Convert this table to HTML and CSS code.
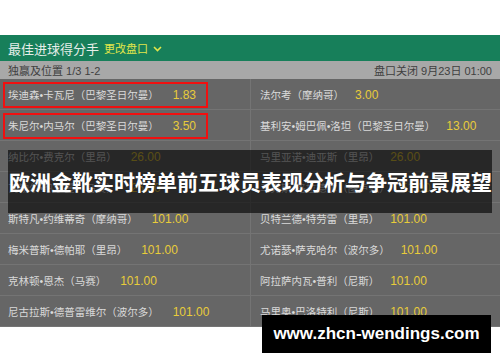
FILE: index.html
```html
<!DOCTYPE html>
<html lang="zh">
<head>
<meta charset="utf-8">
<title>最佳进球得分手</title>
<link rel="stylesheet" href="styles.css">
</head>
<body>
<div class="page">
  <div class="header">
    <span class="title">最佳进球得分手</span>
    <span class="change">更改盘口</span>
    <svg class="chev" width="9" height="6" viewBox="0 0 9 6"><polyline points="1,1 4.5,4.5 8,1" fill="none" stroke="#e2e64a" stroke-width="1.6"/></svg>
  </div>
  <div class="subbar">
    <span>独赢及位置 1/3 1-2</span>
    <span>盘口关闭 9月23日 01:00</span>
  </div>
  <div class="grid">
    <div class="cell left"><div class="box pick"><span class="name">埃迪森•卡瓦尼（巴黎圣日尔曼）</span><span class="odds">1.83</span></div></div>
    <div class="cell right"><div class="box"><span class="name">法尔考（摩纳哥）</span><span class="odds">3.00</span></div></div>

    <div class="cell left"><div class="box pick"><span class="name">朱尼尔•内马尔（巴黎圣日尔曼）</span><span class="odds">3.50</span></div></div>
    <div class="cell right"><div class="box"><span class="name">基利安•姆巴佩•洛坦（巴黎圣日尔曼）</span><span class="odds">13.00</span></div></div>

    <div class="cell left"><div class="box"><span class="name">纳比尔•费克尔（里昂）</span><span class="odds">26.00</span></div></div>
    <div class="cell right"><div class="box"><span class="name">马里亚诺•迪亚斯（里昂）</span><span class="odds">26.00</span></div></div>

    <div class="cell left"><div class="box"><span class="name">瓦勒尔•热尔曼（马赛）</span><span class="odds">26.00</span></div></div>
    <div class="cell right"><div class="box"><span class="name">马克斯•格拉德尔（图卢兹）</span><span class="odds">51.00</span></div></div>

    <div class="cell left"><div class="box"><span class="name">斯特凡•约维蒂奇（摩纳哥）</span><span class="odds">101.00</span></div></div>
    <div class="cell right"><div class="box"><span class="name">贝特兰德•特劳雷（里昂）</span><span class="odds">101.00</span></div></div>

    <div class="cell left"><div class="box"><span class="name">梅米普斯•德帕耶（里昂）</span><span class="odds">101.00</span></div></div>
    <div class="cell right"><div class="box"><span class="name">尤诺瑟•萨克哈尔（波尔多）</span><span class="odds">101.00</span></div></div>

    <div class="cell left"><div class="box"><span class="name">克林顿•恩杰（马赛）</span><span class="odds">101.00</span></div></div>
    <div class="cell right"><div class="box"><span class="name">阿拉萨内瓦•普利（尼斯）</span><span class="odds">101.00</span></div></div>

    <div class="cell left"><div class="box"><span class="name">尼古拉斯•德普雷维尔（波尔多）</span><span class="odds">101.00</span></div></div>
    <div class="cell right"><div class="box"><span class="name">马里奥•巴洛特利（尼斯）</span><span class="odds">101.00</span></div></div>
  </div>
  <div class="banner">欧洲金靴实时榜单前五球员表现分析与争冠前景展望</div>
  <div class="watermark">www.zhcn-wendings.com</div>
</div>
</body>
</html>
```
FILE: styles.css
```css
html, body {
  margin: 0;
  padding: 0;
  background: #ffffff;
}
body {
  font-family: "Liberation Sans", "Noto Sans CJK SC", sans-serif;
}
.page {
  position: relative;
  width: 500px;
  height: 362px;
  padding-top: 35px;
  box-sizing: border-box;
}
.header {
  height: 26px;
  background: #177f5a;
  display: flex;
  align-items: center;
  padding-left: 8px;
  box-sizing: border-box;
}
.title {
  font-size: 13px;
  color: #e6eee9;
  margin-right: 5px;
}
.change {
  font-size: 11px;
  color: #e2e64a;
  margin-right: 5px;
}
.chev {
  display: block;
  margin-top: 1px;
}
.subbar {
  height: 18px;
  background: #a8a8a8;
  display: flex;
  justify-content: space-between;
  align-items: center;
  padding: 0 8px;
  font-size: 11px;
  color: #3f3f3f;
}
.grid {
  display: grid;
  grid-template-columns: 251px 249px;
  background: #666666;
}
.cell {
  height: 30px;
  border-bottom: 1px solid #747474;
  display: flex;
  align-items: center;
}
.left {
  border-right: 1px solid #747474;
  width: 250px;
}
.box {
  display: flex;
  align-items: center;
  height: 26px;
  box-sizing: border-box;
  border: 2px solid transparent;
  padding-left: 3px;
  margin-left: 3px;
  margin-top: 1px;
}
.right .box {
  margin-left: 4px;
}
.pick {
  border-color: #f01010;
  width: 205px;
}
.name {
  font-size: 10.5px;
  color: #dadada;
}
.odds {
  font-size: 12px;
  color: #e8cc3a;
  margin-left: 14px;
}
.right .odds {
  margin-left: 11px;
}
.banner {
  position: absolute;
  left: 8px;
  top: 150px;
  width: 484px;
  height: 63px;
  background: rgba(0, 0, 0, 0.62);
  color: #ffffff;
  font-family: "Noto Sans CJK SC", sans-serif;
  font-weight: bold;
  font-size: 21px;
  line-height: 63px;
  white-space: nowrap;
  padding-left: 1px;
  box-sizing: border-box;
}
.watermark {
  position: absolute;
  left: 262px;
  top: 315px;
  width: 229px;
  height: 38px;
  background: #000000;
  color: #ffffff;
  font-family: "Liberation Sans", sans-serif;
  font-weight: bold;
  font-size: 17px;
  line-height: 38px;
  text-align: center;
}
```
